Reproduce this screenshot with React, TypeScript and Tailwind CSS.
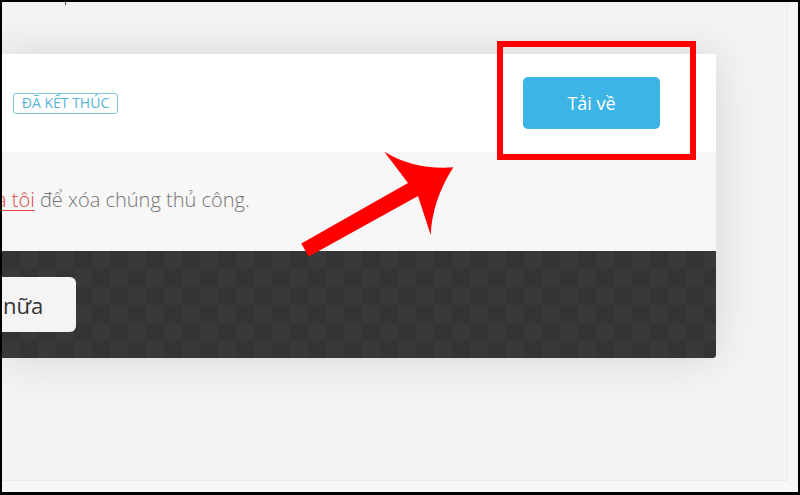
import React from "react";

export default function App() {
  return (
    <div className="relative w-[800px] h-[495px] bg-black pt-[2px] px-[2px] pb-[3px] font-['Open_Sans',sans-serif]">
      <div className="w-full h-full bg-[#f7f7f7] overflow-hidden">
        <div className="w-[786px] h-[479px] border-r border-b border-[#ebebeb] bg-[#f3f3f3] pt-[52px]">
          <div className="w-[714px] rounded-br-[4px] overflow-hidden shadow-[0_0_45px_rgba(0,0,0,0.12)]">
            <div className="h-[98px] bg-white flex items-center justify-between pl-[11px] pr-[56px]">
              <span className="h-[21px] w-[105px] flex items-center justify-center rounded-[3px] border border-[#7fc8de] text-[14px] text-[#56b4d6] leading-none">
                ĐÃ KẾT THÚC
              </span>
              <button className="w-[137px] h-[52px] rounded-[5px] bg-[#3db4e6] text-white text-[18px] font-normal leading-none">
                Tải về
              </button>
            </div>
            <div className="h-[99px] bg-[#f7f7f7] pt-[34px] text-[20px] leading-[27px] font-light text-[#757575] whitespace-nowrap">
              <span className="-ml-[6px] text-[#e04444] underline decoration-1 underline-offset-[3px]">a tôi</span>
              <span> để xóa chúng thủ công.</span>
            </div>
            <div className="h-[107px] pt-[26px] bg-[#363636] bg-[image:repeating-conic-gradient(#393939_0_25%,#343434_0_50%)] bg-[length:36px_36px]">
              <button className="w-[74px] h-[55px] rounded-r-[6px] bg-[#f4f4f4] text-left pl-[1px] text-[22px] text-[#333] leading-none">
                nữa
              </button>
            </div>
          </div>
        </div>
      </div>

      <div className="absolute left-[65px] top-[1px] w-[1px] h-[4px] bg-[#555]" />

      <div className="absolute left-[497px] top-[41px] w-[199px] h-[119px] border-[6px] border-[#ff0000]" />

      <svg className="absolute left-0 top-0" width="800" height="495" viewBox="0 0 800 495">
        <path
          d="M301.3,243.5 L408,183 L384.3,151.7 Q414,170 453.3,167.3 Q432,201 430.7,235 L418,196 L308.7,256.5 Z"
          fill="#ff0000"
        />
      </svg>
    </div>
  );
}
